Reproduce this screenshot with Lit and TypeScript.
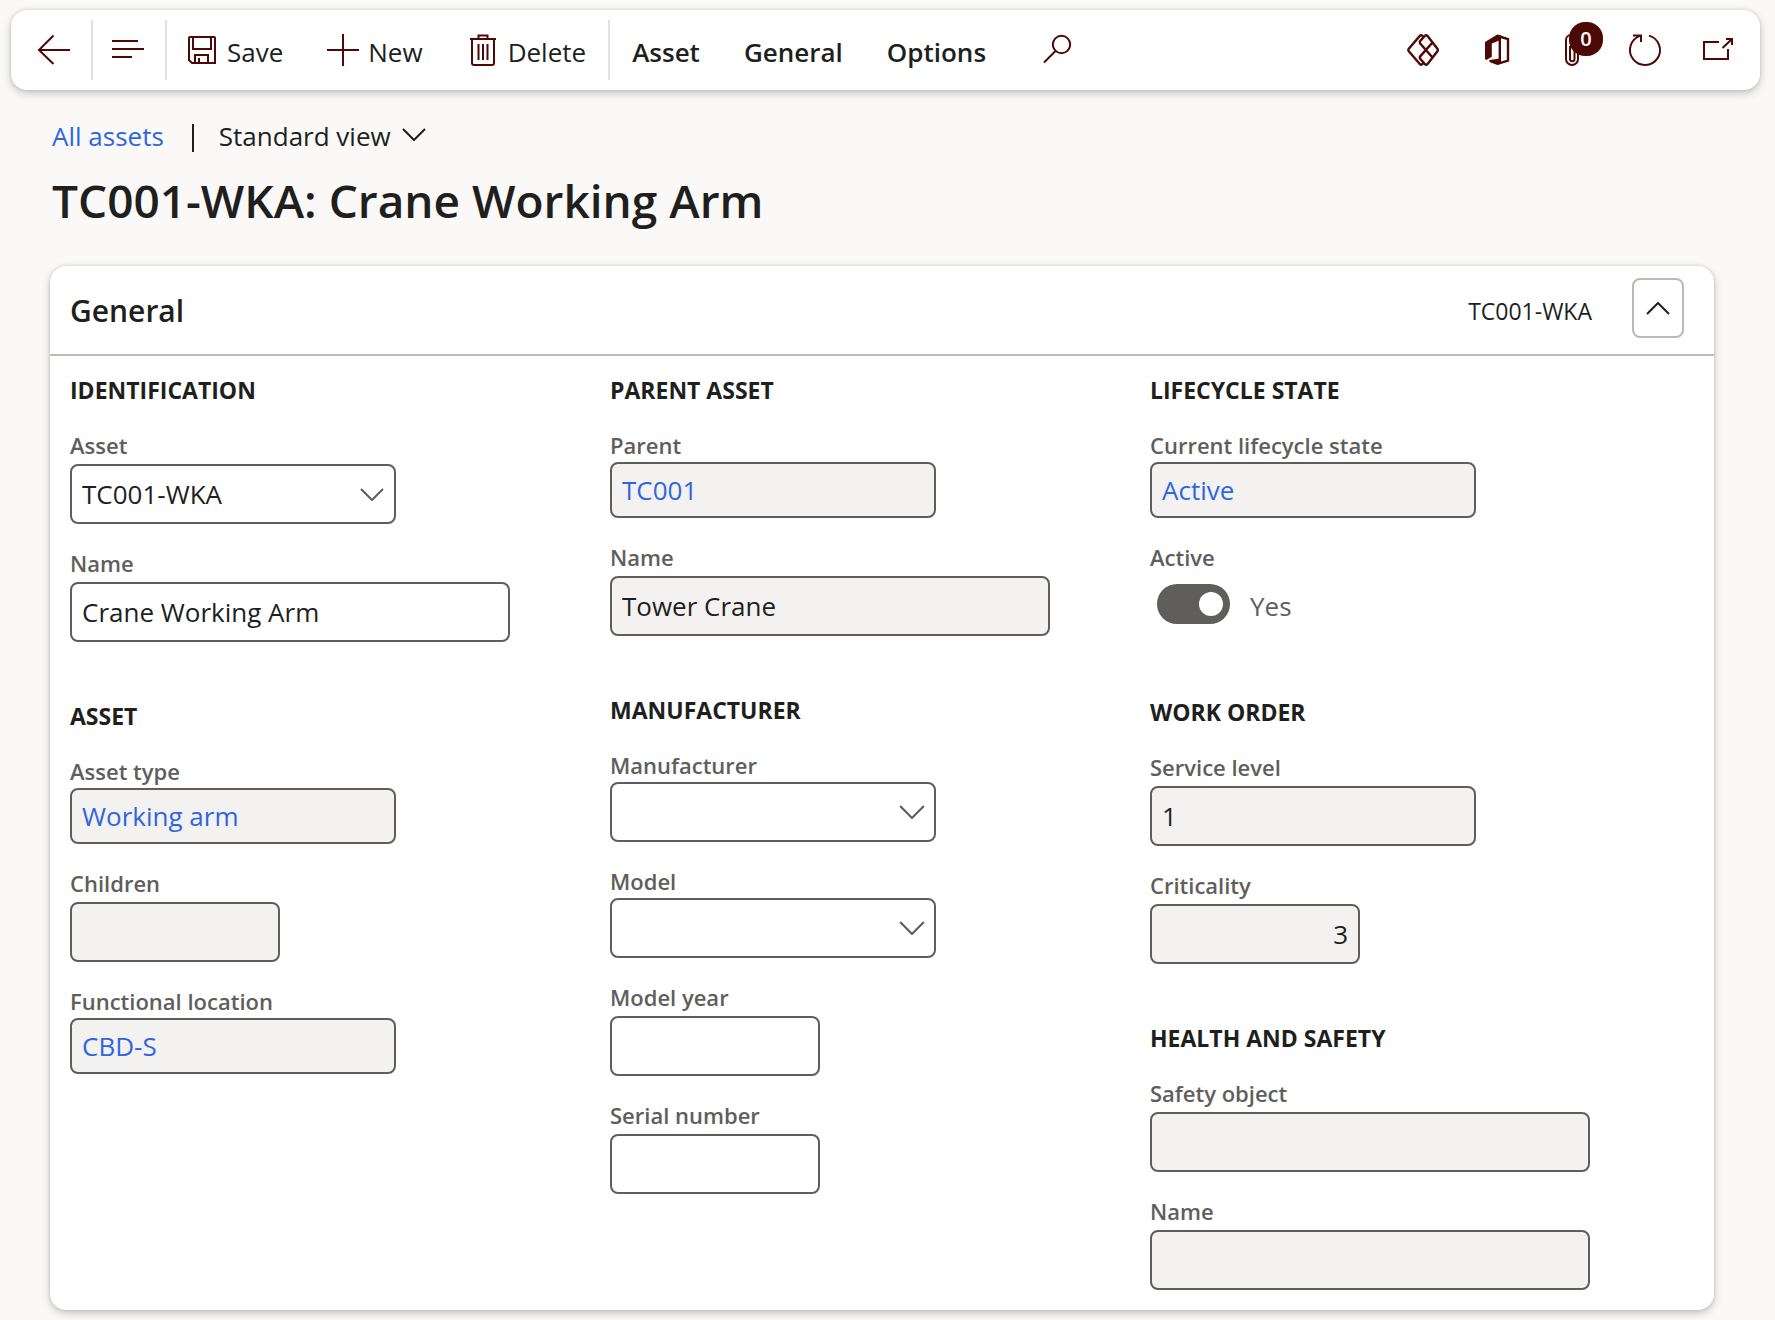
import { LitElement, html, svg, css } from "lit";
import { customElement, property } from "lit/decorators.js";

type Width = "short" | "medium" | "long";

interface Field {
  id: string;
  label: string;
  kind: "text" | "select" | "link" | "toggle";
  width?: Width;
  value?: string;
  readonly?: boolean;
  numeric?: boolean;
}

interface Group {
  title: string;
  fields: Field[];
}

const COLUMNS: Group[][] = [
  [
    {
      title: "IDENTIFICATION",
      fields: [
        { id: "asset", label: "Asset", kind: "select", width: "medium", value: "TC001-WKA" },
        { id: "name", label: "Name", kind: "text", width: "long", value: "Crane Working Arm" },
      ],
    },
    {
      title: "ASSET",
      fields: [
        { id: "asset-type", label: "Asset type", kind: "link", width: "medium", value: "Working arm" },
        { id: "children", label: "Children", kind: "text", width: "short", readonly: true },
        { id: "location", label: "Functional location", kind: "link", width: "medium", value: "CBD-S" },
      ],
    },
  ],
  [
    {
      title: "PARENT ASSET",
      fields: [
        { id: "parent", label: "Parent", kind: "link", width: "medium", value: "TC001" },
        { id: "parent-name", label: "Name", kind: "text", width: "long", value: "Tower Crane", readonly: true },
      ],
    },
    {
      title: "MANUFACTURER",
      fields: [
        { id: "manufacturer", label: "Manufacturer", kind: "select", width: "medium" },
        { id: "model", label: "Model", kind: "select", width: "medium" },
        { id: "model-year", label: "Model year", kind: "text", width: "short" },
        { id: "serial", label: "Serial number", kind: "text", width: "short" },
      ],
    },
  ],
  [
    {
      title: "LIFECYCLE STATE",
      fields: [
        { id: "state", label: "Current lifecycle state", kind: "link", width: "medium", value: "Active" },
        { id: "active", label: "Active", kind: "toggle", value: "Yes" },
      ],
    },
    {
      title: "WORK ORDER",
      fields: [
        { id: "service", label: "Service level", kind: "text", width: "medium", value: "1", readonly: true },
        { id: "criticality", label: "Criticality", kind: "text", width: "short", value: "3", readonly: true, numeric: true },
      ],
    },
    {
      title: "HEALTH AND SAFETY",
      fields: [
        { id: "safety", label: "Safety object", kind: "text", width: "long", readonly: true },
        { id: "safety-name", label: "Name", kind: "text", width: "long", readonly: true },
      ],
    },
  ],
];

const ICONS = {
  back: svg`<path d="M1 16H32M15.5 1.5L1 16L15.5 30"/>`,
  lines: svg`<path d="M0 7H26M0 15H32M0 23H20"/>`,
  save: svg`<path d="M4 3H28Q29 3 29 4V29H6L3 26V4Q3 3 4 3ZM7 3V15H25V3M9 29V21H22V29M13 24V29"/>`,
  plus: svg`<path d="M0 16H32M16 0V32"/>`,
  trash: svg`<path d="M3 5H29M11.5 5V1.5H20.5V5M5 5V29Q5 31 7 31H25Q27 31 27 29V5"/><path d="M11.5 10V26M16 10V26M20.5 10V26"/>`,
  search: svg`<circle cx="20.5" cy="10.5" r="8.7"/><path d="M14.5 17L3 28.5"/>`,
  apps: svg`<g class="heavy"><path d="M16.5 3L15 1.5Q14 .8 13 1.6L1.6 15Q.9 16 1.6 17L13 30.2Q14 31.2 15 30.4L16.5 29"/><path d="M18 1.6Q19.3 .7 20.4 1.8L30.6 15Q31.2 16 30.6 17L20.4 30.2Q19.3 31.2 18 30.2L13 24.5Q12.4 23.5 13 22.6L25.5 8.5M18 1.6L13 7.2Q12.4 8.2 13 9.2L25.5 23.5"/></g>`,
  office: svg`<path class="solid" d="M4 8L16.3 .4L20 1.5V5.8L10.8 9.4V22.8L5.4 26L4 25ZM8.4 26L19 24.6V30L16.3 31L8.4 28Z"/><path class="heavy" d="M17 2L27 5.2V26.6L17 29.6M18.8 3V29"/>`,
  clip: svg`<path d="M23 8V25A6 6 0 0 1 11 25V6A5 5 0 0 1 21 6"/><path d="M15 12V25A2.2 2.2 0 0 0 19.5 25V8"/>`,
  refresh: svg`<path d="M20 1.6A15 15 0 1 1 11 1.9M4 1.4H12V8"/>`,
  popout: svg`<path d="M16 8H1V25H25V15M19.5 14L29 5M23 5H29V11"/>`,
};

const icon = (name: keyof typeof ICONS) =>
  html`<svg class="icon" viewBox="0 0 32 32" aria-hidden="true">${ICONS[name]}</svg>`;

const chevron = (className: string, d = "M1 1L12 12L23 1") =>
  html`<svg class=${className} viewBox="0 0 24 13" aria-hidden="true"><path d=${d} /></svg>`;

@customElement("asset-field")
class AssetField extends LitElement {
  @property({ attribute: false }) field!: Field;

  static styles = css`
    :host {
      display: block;
    }
    .field {
      display: flex;
      flex-direction: column;
      align-items: flex-start;
      gap: 2px;
    }
    .spaced {
      gap: 4px;
    }
    .label {
      font-size: 22px;
      line-height: 30px;
      font-weight: 600;
      color: #605e5c;
    }
    .box {
      box-sizing: border-box;
      height: 60px;
      max-width: 100%;
      margin: 0;
      padding: 0 10px;
      border: 2px solid #605e5c;
      border-radius: 8px;
      background: #fff;
      color: #201f1e;
      font: inherit;
      font-size: 26px;
      line-height: 36px;
      outline-offset: 2px;
    }
    .short {
      width: 210px;
    }
    .medium {
      width: 326px;
    }
    .long {
      width: 440px;
    }
    .readonly {
      background: #f3f2f1;
    }
    .numeric {
      text-align: right;
    }
    .link-box {
      display: flex;
      align-items: center;
      height: 56px;
    }
    .link {
      color: #2f66df;
      text-decoration: none;
    }
    .link:hover {
      text-decoration: underline;
    }
    .picker {
      display: grid;
      align-items: center;
      max-width: 100%;
    }
    .select {
      grid-area: 1 / 1;
      width: 100%;
      appearance: none;
      padding-right: 48px;
    }
    .chevron {
      grid-area: 1 / 1;
      justify-self: end;
      width: 26px;
      height: 14px;
      margin-right: 11px;
      pointer-events: none;
      fill: none;
      stroke: #605e5c;
      stroke-width: 2;
    }
    .filled {
      width: 24px;
      height: 13px;
      margin-right: 12px;
    }
    .toggle-row {
      display: flex;
      align-items: center;
      gap: 20px;
      height: 64px;
      padding-left: 7px;
      padding-bottom: 4px;
      box-sizing: border-box;
      color: #605e5c;
      font-size: 26px;
      line-height: 36px;
    }
    .switch {
      appearance: none;
      display: flex;
      align-items: center;
      justify-content: flex-end;
      box-sizing: border-box;
      width: 73px;
      height: 40px;
      margin: 0;
      padding: 0 7px;
      border-radius: 20px;
      background: #605e5c;
    }
    .switch::before {
      content: "";
      width: 24px;
      height: 24px;
      border-radius: 50%;
      background: #fff;
    }
    .switch:not(:checked) {
      justify-content: flex-start;
    }
    .state {
      padding-top: 4px;
    }
  `;

  render() {
    const f = this.field;
    if (f.kind === "link") {
      return html`<div class="field">
        <span class="label" id="${f.id}-label">${f.label}</span>
        <div class="box link-box readonly ${f.width}">
          <a class="link" href="#${f.id}" id=${f.id} aria-labelledby="${f.id}-label ${f.id}">${f.value}</a>
        </div>
      </div>`;
    }
    if (f.kind === "toggle") {
      return html`<div class="field">
        <label class="label" for=${f.id}>${f.label}</label>
        <div class="toggle-row">
          <input class="switch" type="checkbox" role="switch" id=${f.id} checked />
          <span class="state">${f.value}</span>
        </div>
      </div>`;
    }
    if (f.kind === "select") {
      return html`<div class="field ${f.value ? "spaced" : ""}">
        <label class="label" for=${f.id}>${f.label}</label>
        <div class="picker ${f.width}">
          <select class="box select" id=${f.id}>
            <option>${f.value ?? ""}</option>
          </select>
          ${chevron(f.value ? "chevron filled" : "chevron")}
        </div>
      </div>`;
    }
    return html`<div class="field spaced">
      <label class="label" for=${f.id}>${f.label}</label>
      <input
        class="box ${f.width} ${f.readonly ? "readonly" : ""} ${f.numeric ? "numeric" : ""}"
        type="text"
        id=${f.id}
        .value=${f.value ?? ""}
        ?readonly=${f.readonly}
      />
    </div>`;
  }
}

@customElement("action-bar")
class ActionBar extends LitElement {
  static styles = css`
    :host {
      display: block;
    }
    .bar {
      display: flex;
      align-items: center;
      justify-content: space-between;
      height: 80px;
      padding: 0 4px 0 6px;
      border-radius: 16px;
      background: #fff;
      box-shadow: 0 3px 8px rgba(0, 0, 0, 0.22), 0 0 3px rgba(0, 0, 0, 0.14);
    }
    .group {
      display: flex;
      align-items: center;
    }
    .action {
      display: flex;
      align-items: center;
      gap: 9px;
      height: 60px;
      margin: 0;
      padding: 0 21px;
      border: 0;
      background: none;
      color: #201f1e;
      font: inherit;
      font-size: 26px;
      line-height: 36px;
      white-space: nowrap;
      cursor: pointer;
    }
    .command {
      padding: 0 22px;
    }
    .divided {
      padding-left: 19px;
      border-left: 2px solid #e1e1e1;
    }
    .tab {
      padding: 0 22px;
      font-weight: 600;
    }
    .search {
      margin-left: 12px;
    }
    .text {
      padding-top: 4px;
    }
    .icon {
      width: 32px;
      height: 32px;
      fill: none;
      stroke: #4c0905;
      stroke-width: 2;
      overflow: visible;
    }
    .heavy {
      stroke-width: 2.4;
    }
    .solid {
      fill: #4c0905;
      stroke: none;
    }
    .attachments {
      position: relative;
    }
    .badge {
      position: absolute;
      left: 35px;
      top: 2px;
      width: 34px;
      height: 34px;
      border-radius: 16px;
      background: #4c0905;
      color: #fff;
      font-size: 20px;
      line-height: 34px;
      font-weight: 600;
      text-align: center;
    }
  `;

  render() {
    return html`<nav class="bar" aria-label="Actions">
      <div class="group">
        <button class="action" aria-label="Back">${icon("back")}</button>
        <button class="action divided" aria-label="Show list">${icon("lines")}</button>
        <button class="action command divided">${icon("save")}<span class="text">Save</span></button>
        <button class="action command">${icon("plus")}<span class="text">New</span></button>
        <button class="action command">${icon("trash")}<span class="text">Delete</span></button>
        <button class="action tab divided"><span class="text">Asset</span></button>
        <button class="action tab"><span class="text">General</span></button>
        <button class="action tab"><span class="text">Options</span></button>
        <button class="action search" aria-label="Search">${icon("search")}</button>
      </div>
      <div class="group">
        <button class="action" aria-label="Power Apps">${icon("apps")}</button>
        <button class="action" aria-label="Open in Office">${icon("office")}</button>
        <button class="action attachments" aria-label="Attachments">
          ${icon("clip")}<span class="badge">0</span>
        </button>
        <button class="action" aria-label="Refresh">${icon("refresh")}</button>
        <button class="action" aria-label="Open in new window">${icon("popout")}</button>
      </div>
    </nav>`;
  }
}

@customElement("app-root")
class AppRoot extends LitElement {
  static styles = css`
    :host {
      display: block;
      box-sizing: border-box;
      min-height: 100vh;
      padding: 10px 15px 10px 11px;
      background: #faf9f8;
      color: #201f1e;
      font-family: "Open Sans", "Noto Sans", sans-serif;
    }
    .crumbs {
      display: flex;
      align-items: center;
      padding: 28px 0 14px 41px;
      font-size: 26px;
      line-height: 36px;
    }
    .link {
      color: #2f66df;
      text-decoration: none;
    }
    .divider {
      width: 2px;
      height: 28px;
      margin: 4px 25px 0 28px;
      background: #201f1e;
    }
    .view {
      display: flex;
      align-items: center;
      gap: 11px;
      margin: 0;
      padding: 0;
      border: 0;
      background: none;
      color: inherit;
      font: inherit;
      cursor: pointer;
    }
    .chevron {
      width: 24px;
      height: 13px;
      fill: none;
      stroke: #201f1e;
      stroke-width: 2;
    }
    .view .chevron {
      margin-bottom: 4px;
    }
    .title {
      margin: 0 0 34px;
      padding-left: 41px;
      font-size: 46px;
      line-height: 64px;
      font-weight: 600;
    }
    .card {
      margin: 0 46px 0 39px;
      border-radius: 16px;
      background: #fff;
      box-shadow: 0 3px 8px rgba(0, 0, 0, 0.22), 0 0 3px rgba(0, 0, 0, 0.14);
    }
    .card-head {
      display: flex;
      align-items: center;
      gap: 40px;
      height: 88px;
      padding: 0 30px 0 20px;
      border-bottom: 2px solid #bbbbb5;
    }
    .card-title {
      flex: 1;
      margin: 0;
      padding-top: 2px;
      font-size: 30px;
      line-height: 40px;
      font-weight: 600;
    }
    .summary {
      padding-top: 2px;
      font-size: 23px;
      line-height: 32px;
    }
    .collapse {
      display: flex;
      align-items: center;
      justify-content: center;
      width: 52px;
      height: 60px;
      margin: 0 0 4px;
      padding: 0;
      border: 2px solid #bbbbb5;
      border-radius: 8px;
      background: #fff;
      cursor: pointer;
    }
    .columns {
      display: grid;
      grid-template-columns: repeat(3, minmax(0, 1fr));
      padding: 20px 24px 20px 20px;
    }
    .column {
      display: flex;
      flex-direction: column;
      gap: 60px;
    }
    .group {
      display: flex;
      flex-direction: column;
      gap: 24px;
    }
    .group-title {
      margin: 0 0 2px;
      font-size: 23px;
      line-height: 28px;
      font-weight: 700;
    }
  `;

  render() {
    return html`
      <action-bar></action-bar>
      <div class="crumbs">
        <a class="link" href="#assets">All assets</a>
        <span class="divider"></span>
        <button class="view">Standard view ${chevron("chevron")}</button>
      </div>
      <h1 class="title">TC001-WKA: Crane Working Arm</h1>
      <section class="card">
        <header class="card-head">
          <h2 class="card-title">General</h2>
          <span class="summary">TC001-WKA</span>
          <button class="collapse" aria-label="Collapse General">
            ${chevron("chevron", "M1 12L12 1L23 12")}
          </button>
        </header>
        <div class="columns">
          ${COLUMNS.map(
            (groups) => html`<div class="column">
              ${groups.map(
                (g) => html`<section class="group">
                  <h3 class="group-title">${g.title}</h3>
                  ${g.fields.map((f) => html`<asset-field .field=${f}></asset-field>`)}
                </section>`
              )}
            </div>`
          )}
        </div>
      </section>
    `;
  }
}
